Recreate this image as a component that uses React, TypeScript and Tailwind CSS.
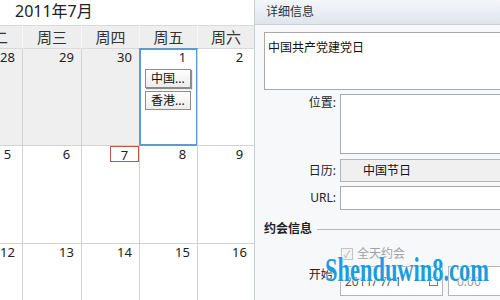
import type { ReactNode } from "react"

type Day = {
  n: number
  muted?: boolean
  selected?: boolean
  today?: boolean
  events?: string[]
}

const weekdays = ["周二", "周三", "周四", "周五", "周六"]

const weeks: Day[][] = [
  [
    { n: 28, muted: true },
    { n: 29, muted: true },
    { n: 30, muted: true },
    { n: 1, selected: true, events: ["中国...", "香港..."] },
    { n: 2 },
  ],
  [{ n: 5 }, { n: 6 }, { n: 7, today: true }, { n: 8 }, { n: 9 }],
  [{ n: 12 }, { n: 13 }, { n: 14 }, { n: 15 }, { n: 16 }],
]

const rowHeights = ["h-[97px]", "h-[98px]", "h-[60px]"]

function DayCell({ day, first, height }: { day: Day; first: boolean; height: string }) {
  return (
    <div
      className={`relative ${height} border-b border-[#d3d3d3] ${first ? "" : "border-l"} ${
        day.muted ? "bg-[#efefef]" : "bg-white"
      }`}
    >
      <div className="flex justify-end">
        <span
          className={`h-[16px] w-[29px] text-center text-[13px] leading-[16px] text-[#222] ${
            day.today ? "border border-[#c0504d] leading-[14px]" : ""
          }`}
        >
          {day.n}
        </span>
      </div>
      {day.events ? (
        <div className="mt-[4px] flex flex-col gap-[3px] pl-[5px]">
          {day.events.map((ev, i) => (
            <div
              key={ev}
              className={`h-[19px] w-[46px] border border-[#8c8c8c] bg-gradient-to-b from-white to-[#ececec] pl-[5px] text-[12px] leading-[17px] text-[#111] ${
                i === 0 ? "shadow-[1px_1px_1px_rgba(0,0,0,0.45)]" : ""
              }`}
            >
              {ev}
            </div>
          ))}
        </div>
      ) : null}
      {day.selected ? (
        <div className="absolute bottom-[-1px] left-[-1px] right-[-1px] top-[-1px] border-2 border-[#5b9bd2]" />
      ) : null}
    </div>
  )
}

function Field({ label, children, className = "" }: { label: string; children: ReactNode; className?: string }) {
  return (
    <div className={`flex ${className}`}>
      <div className="w-[73px] shrink-0 pr-[1px] text-right text-[12px] text-[#222]">{label}</div>
      <div className="ml-[3px] flex-1">{children}</div>
    </div>
  )
}

export default function App() {
  return (
    <div className="relative flex h-[300px] w-[500px] overflow-hidden bg-white font-['Noto_Sans','Noto_Sans_CJK_SC',sans-serif]">
      {/* calendar */}
      <div className="w-[254px] shrink-0 overflow-hidden">
        <div className="h-[25px] pl-[15px] text-[16px] leading-[22px] text-[#222]">2011年7月</div>
        <div className="ml-[-36px] grid w-[290px] grid-cols-[58px_59px_58px_58px_57px]">
          {weekdays.map((w, i) => (
            <div
              key={w}
              className={`h-[24px] border-b border-t border-[#dadada] bg-[#eeeeee] text-center text-[15px] leading-[22px] text-[#333] ${
                i === 0 ? "" : "border-l border-l-[#f7f7f7]"
              }`}
            >
              {w}
            </div>
          ))}
          {weeks.map((week, r) =>
            week.map((d, i) => (
              <DayCell key={`${r}-${i}`} day={d} first={i === 0} height={rowHeights[r]} />
            )),
          )}
        </div>
      </div>

      {/* details panel */}
      <div className="flex-1 overflow-hidden border-l border-[#c8ced6] bg-[#f6f8fa]">
        <div className="h-[25px] border-b border-[#c9d0d8] bg-gradient-to-b from-[#f4f6f9] to-[#dfe5ec] pl-[11px] text-[12px] leading-[24px] text-[#333]">
          详细信息
        </div>
        <div className="pl-[9px] pt-[7px]">
          <div className="h-[58px] w-[260px] border border-[#a9a9a9] bg-white px-[3px] pt-[8px] text-[12px] leading-[14px] text-[#111]">
            中国共产党建党日
          </div>
          <Field label="位置:" className="mt-[4px]">
            <div className="h-[60px] w-[200px] border border-[#a9a9a9] bg-white" />
          </Field>
          <Field label="日历:" className="mt-[5px] items-center">
            <div className="h-[23px] w-[200px] border border-[#b4b4b4] bg-[#f0f0f0] pl-[22px] text-[12px] leading-[21px] text-[#111]">
              中国节日
            </div>
          </Field>
          <Field label="URL:" className="mt-[4px] items-center">
            <div className="h-[24px] w-[200px] border border-[#a9a9a9] bg-white" />
          </Field>
          <div className="mt-[10px] flex items-center gap-[5px]">
            <span className="text-[12px] font-bold text-[#222]">约会信息</span>
            <span className="h-px flex-1 bg-[#b8b8b8]" />
          </div>
          <div className="ml-[77px] mt-[9px] flex items-center gap-[4px]">
            <span className="flex h-[12px] w-[12px] items-center justify-center border border-[#c4c4c4] bg-[#f4f4f4] text-[10px] leading-none text-[#b0b0b0]">
              ✓
            </span>
            <span className="text-[12px] leading-[14px] text-[#a3a3a3]">全天约会</span>
          </div>
          <Field label="开始:" className="mt-[5px]">
            <div className="flex gap-[5px]">
              <div className="flex h-[30px] w-[103px] items-start justify-between border border-[#b4b4b4] bg-white px-[4px] pt-[8px] text-[12px] leading-[14px] text-[#555]">
                <span>2011/ 7/ 1</span>
                <span className="mt-[2px] h-[9px] w-[9px] border border-[#777]" />
              </div>
              <div className="h-[30px] w-[60px] border border-[#b4b4b4] bg-white pl-[8px] pt-[8px] text-[12px] leading-[14px] text-[#999]">
                0:00
              </div>
            </div>
          </Field>
        </div>
      </div>

      {/* watermark */}
      <div className="pointer-events-none absolute left-[325px] top-[250px] origin-left scale-x-[0.66] whitespace-nowrap font-['Liberation_Serif',serif] text-[34px] font-bold leading-[40px] text-[#1c9be0] [text-shadow:0_0_2px_#fff,0_0_2px_#fff,0_0_1px_#fff]">
        Shenduwin8.com
      </div>
    </div>
  )
}
